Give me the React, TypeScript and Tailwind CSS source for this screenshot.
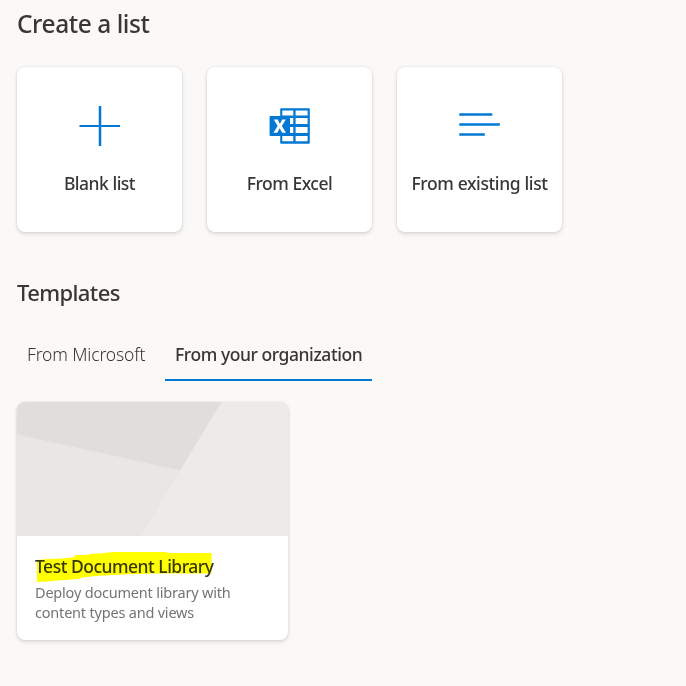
import type { ReactNode } from 'react';

const cardShadow = 'shadow-[0_2px_4px_rgba(0,0,0,0.13),0_0px_2px_rgba(0,0,0,0.11)]';

function PlusIcon() {
  return (
    <svg width="42" height="42" viewBox="0 0 42 42" className="block">
      <path d="M0.500 21h40.500" stroke="#0078d4" strokeWidth="2" />
      <path d="M21 1v40" stroke="#0078d4" strokeWidth="2.5" />
    </svg>
  );
}

function ExcelIcon() {
  return (
    <svg width="42" height="42" viewBox="0 0 42 42" className="block">
      <rect x="11.200" y="3.200" width="29.600" height="35.600" rx="1" fill="#0078d4" />
      <path
        d="M13.3 5.6h11v4.8h-11zM26.6 5.6h12v4.8h-12zM21 13h3.3v6H21zM26.6 13h12v6h-12zM21 22h3.3v6H21zM26.6 22h12v6h-12zM13.3 31h11v5.3h-11zM26.6 31h12v5.3h-12z"
        fill="white"
      />
      <rect x="0.6" y="11" width="20" height="20" rx="1" fill="#0078d4" />
      <path
        d="M4.8 14.500h3.9l2.2 4.300 2.3-4.300h3.600l-3.900 6.500 4.100 6.700h-3.900l-2.400-4.500-2.400 4.500H4.400l4.200-6.700z"
        fill="white"
      />
    </svg>
  );
}

function LinesIcon() {
  return (
    <svg width="42" height="42" viewBox="0 0 42 42" className="block">
      <path d="M.3 9.6h33M.3 19.6h40.500M.3 29.6h25.500" stroke="#0078d4" strokeWidth="2.5" />
    </svg>
  );
}

function CreateCard({ icon, children }: { icon: ReactNode; children: ReactNode }) {
  return (
    <button
      className={`flex h-[165px] w-[165px] flex-col items-center rounded-lg bg-white pt-[38px] ${cardShadow}`}
    >
      {icon}
      <span className="mt-[24px] text-[17.5px] leading-6 font-medium whitespace-nowrap">
        {children}
      </span>
    </button>
  );
}

export default function App() {
  return (
    <main className="min-h-screen bg-[#faf9f8] pt-2 pl-[17px] font-['Noto_Sans','Open_Sans',sans-serif] text-[#383735]">
      <h1 className="text-[24.5px] leading-8 font-medium">
        <span className="tracking-[-0.45px]">Create a list</span>
      </h1>

      <section className="mt-[27px] flex gap-[25px]">
        <CreateCard icon={<PlusIcon />}>
          <span className="tracking-[-0.5px]">Blank list</span>
        </CreateCard>
        <CreateCard icon={<ExcelIcon />}>
          <span className="tracking-[-0.5px]">From Excel</span>
        </CreateCard>
        <CreateCard icon={<LinesIcon />}>
          <span className="tracking-[-0.38px]">From existing list</span>
        </CreateCard>
      </section>

      <h2 className="mt-[44px] text-[22px] leading-8 font-medium">
        <span className="tracking-[-0.6px]">Templates</span>
      </h2>

      <nav className="mt-[22px] flex h-[51px] text-[17.5px] leading-[46px]">
        <button className="w-[148px] pb-[3px] pl-[10px] text-left whitespace-nowrap">
          <span className="font-light tracking-[-0.15px]">From Microsoft</span>
        </button>
        <button className="w-[207px] border-b-2 border-[#0078d4] pb-[2px] pl-[10px] text-left whitespace-nowrap">
          <span className="font-medium tracking-[-0.44px]">From your organization</span>
        </button>
      </nav>

      <article className={`mt-[21px] h-[238px] w-[271px] overflow-hidden rounded-lg bg-white ${cardShadow}`}>
        <svg width="271" height="134" viewBox="0 0 271 134" className="block">
          <path d="M0 0h271v134H0z" fill="#ecebe9" />
          <path d="M0 32.5 163 68.5 124 134H0z" fill="#e8e7e5" />
          <path d="M0 0h204.500L163 68.500 0 32.500z" fill="#dfdedd" />
        </svg>
        <div className="pt-[18px] pl-[18px]">
          <h3 className="relative text-[17.5px] leading-6 font-medium whitespace-nowrap">
            <span className="tracking-[-0.5px]">Test Document Library</span>
            <svg
              width="180"
              height="34"
              viewBox="0 0 180 34"
              className="absolute -top-1 left-0 mix-blend-multiply"
            >
              <path
                d="M2 10 13 9 26 8.500 38 7.500 41 5H53L55 3.700 65 3.500 78 2H132V3H176.500V23.500H119L85 24.500 61 26 47 27.500 44 29 22 30.500 13 31.500 2 32z"
                fill="#ffff00"
              />
            </svg>
          </h3>
          <p className="mt-[4px] text-[14.5px] leading-5 text-[#767472]">
            <span className="block tracking-[-0.2px]">Deploy document library with</span>
            <span className="block tracking-[-0.2px]">content types and views</span>
          </p>
        </div>
      </article>
    </main>
  );
}
